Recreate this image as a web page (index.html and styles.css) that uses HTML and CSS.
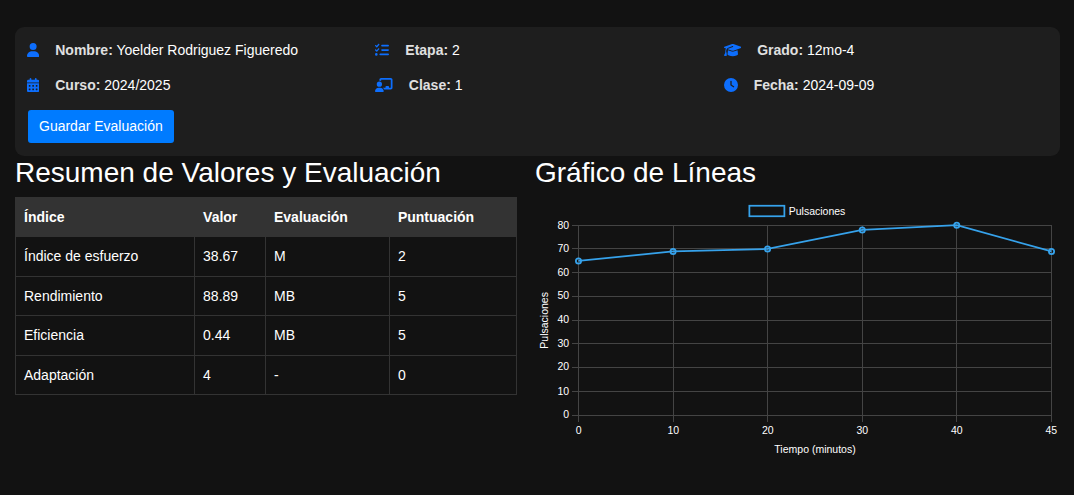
FILE: index.html
```html
<!DOCTYPE html>
<html lang="es">
<head>
<meta charset="utf-8">
<meta name="viewport" content="width=device-width, initial-scale=1">
<title>Evaluación</title>
<link rel="stylesheet" href="styles.css">
</head>
<body>
<main class="page">
  <section class="card">
    <div class="info-grid">
      <div class="info">
        <svg class="icon" viewBox="0 0 448 512" aria-hidden="true"><path d="M224 256A128 128 0 1 0 224 0a128 128 0 1 0 0 256zm-45.7 48C79.8 304 0 383.8 0 482.3C0 498.7 13.3 512 29.7 512H418.3c16.4 0 29.7-13.3 29.7-29.7C448 383.8 368.2 304 269.7 304H178.3z"/></svg>
        <p><strong>Nombre:</strong> Yoelder Rodriguez Figueredo</p>
      </div>
      <div class="info">
        <svg class="icon" viewBox="0 0 512 512" aria-hidden="true"><path d="M152.1 38.2c9.9 8.9 10.7 24 1.8 33.9l-72 80c-4.4 4.9-10.6 7.8-17.2 7.9s-12.9-2.4-17.6-7L7 113C-2.3 103.6-2.3 88.4 7 79s24.6-9.4 33.9 0l22.1 22.1 55.1-61.2c8.9-9.9 24-10.7 33.9-1.8zm0 160c9.9 8.9 10.7 24 1.8 33.9l-72 80c-4.4 4.9-10.6 7.8-17.2 7.9s-12.9-2.4-17.6-7L7 273c-9.4-9.4-9.4-24.6 0-33.9s24.6-9.4 33.9 0l22.1 22.1 55.1-61.2c8.9-9.9 24-10.7 33.9-1.8zM224 96c0-17.7 14.3-32 32-32H480c17.7 0 32 14.3 32 32s-14.3 32-32 32H256c-17.7 0-32-14.3-32-32zm0 160c0-17.7 14.3-32 32-32H480c17.7 0 32 14.3 32 32s-14.3 32-32 32H256c-17.7 0-32-14.3-32-32zM160 416c0-17.7 14.3-32 32-32H480c17.7 0 32 14.3 32 32s-14.3 32-32 32H192c-17.7 0-32-14.3-32-32zM48 368a48 48 0 1 1 0 96 48 48 0 1 1 0-96z"/></svg>
        <p><strong>Etapa:</strong> 2</p>
      </div>
      <div class="info">
        <svg class="icon" viewBox="0 0 640 512" aria-hidden="true"><path d="M320 32c-8.1 0-16.1 1.4-23.7 4.1L15.8 137.4C6.3 140.9 0 149.9 0 160s6.3 19.1 15.8 22.6l57.9 20.9C57.3 229.3 48 259.8 48 291.9v28.1c0 28.4-10.8 57.7-22.3 80.8c-6.5 13-13.9 25.8-22.5 37.6C0 442.7-.9 448.3 .9 453.4s6 8.9 11.2 10.2l64 16c4.2 1.1 8.7 .3 12.4-2s6.3-6.1 7.1-10.4c8.6-42.8 4.3-81.2-2.1-108.7C90.3 344.3 86 329.8 80 316.5V291.9c0-30.2 10.2-58.7 27.9-81.5c12.9-15.5 29.6-28 49.2-35.7l157-61.7c8.2-3.2 17.5 .8 20.7 9s-.8 17.5-9 20.7l-157 61.7c-12.4 4.9-23.3 12.4-32.2 21.6l159.6 57.6c7.6 2.7 15.6 4.1 23.7 4.1s16.1-1.4 23.7-4.1L624.2 182.6c9.5-3.4 15.8-12.5 15.8-22.6s-6.3-19.1-15.8-22.6L343.7 36.1C336.1 33.4 328.1 32 320 32zM128 408c0 35.3 86 72 192 72s192-36.7 192-72L496.7 262.6 354.5 314c-11.1 4-22.8 6-34.5 6s-23.5-2-34.5-6L143.3 262.6 128 408z"/></svg>
        <p><strong>Grado:</strong> 12mo-4</p>
      </div>
      <div class="info">
        <svg class="icon" viewBox="0 0 448 512" aria-hidden="true"><path d="M128 0c17.7 0 32 14.3 32 32V64H288V32c0-17.7 14.3-32 32-32s32 14.3 32 32V64h48c26.5 0 48 21.5 48 48v48H0V112C0 85.5 21.5 64 48 64H96V32c0-17.7 14.3-32 32-32zM0 192H448V464c0 26.5-21.5 48-48 48H48c-26.5 0-48-21.5-48-48V192zm64 80v32c0 8.8 7.2 16 16 16h32c8.8 0 16-7.2 16-16V272c0-8.8-7.2-16-16-16H80c-8.8 0-16 7.2-16 16zm128 0v32c0 8.8 7.2 16 16 16h32c8.8 0 16-7.2 16-16V272c0-8.8-7.2-16-16-16H208c-8.8 0-16 7.2-16 16zm144-16c-8.8 0-16 7.2-16 16v32c0 8.8 7.2 16 16 16h32c8.8 0 16-7.2 16-16V272c0-8.8-7.2-16-16-16H336zM64 400v32c0 8.8 7.2 16 16 16h32c8.8 0 16-7.2 16-16V400c0-8.8-7.2-16-16-16H80c-8.8 0-16 7.2-16 16zm144-16c-8.8 0-16 7.2-16 16v32c0 8.8 7.2 16 16 16h32c8.8 0 16-7.2 16-16V400c0-8.8-7.2-16-16-16H208zm112 16v32c0 8.8 7.2 16 16 16h32c8.8 0 16-7.2 16-16V400c0-8.8-7.2-16-16-16H336c-8.8 0-16 7.2-16 16z"/></svg>
        <p><strong>Curso:</strong> 2024/2025</p>
      </div>
      <div class="info">
        <svg class="icon" viewBox="0 0 640 512" aria-hidden="true"><path d="M160 64c0-35.3 28.7-64 64-64H576c35.3 0 64 28.7 64 64V352c0 35.3-28.7 64-64 64H336.8c-11.8-25.5-29.9-47.5-52.4-64H384V320c0-17.7 14.3-32 32-32h64c17.7 0 32 14.3 32 32v32h64V64L224 64v49.1C205.2 102.2 183.3 96 160 96V64zm0 64a96 96 0 1 1 0 192 96 96 0 1 1 0-192zM133.3 352h53.3C260.3 352 320 411.7 320 485.3c0 14.7-11.9 26.7-26.7 26.7H26.7C11.9 512 0 500.1 0 485.3C0 411.7 59.7 352 133.3 352z"/></svg>
        <p><strong>Clase:</strong> 1</p>
      </div>
      <div class="info">
        <svg class="icon" viewBox="0 0 512 512" aria-hidden="true"><path d="M256 0a256 256 0 1 1 0 512A256 256 0 1 1 256 0zM232 120V256c0 8 4 15.5 10.7 20l96 64c11 7.4 25.9 4.4 33.3-6.7s4.4-25.9-6.7-33.3L280 243.2V120c0-13.3-10.7-24-24-24s-24 10.7-24 24z"/></svg>
        <p><strong>Fecha:</strong> 2024-09-09</p>
      </div>
    </div>
    <button class="save" type="button">Guardar Evaluación</button>
  </section>

  <div class="panels">
    <section>
      <h2 class="title">Resumen de Valores y Evaluación</h2>
      <table class="summary">
        <thead>
          <tr><th>Índice</th><th>Valor</th><th>Evaluación</th><th>Puntuación</th></tr>
        </thead>
        <tbody>
          <tr><td>Índice de esfuerzo</td><td>38.67</td><td>M</td><td>2</td></tr>
          <tr><td>Rendimiento</td><td>88.89</td><td>MB</td><td>5</td></tr>
          <tr><td>Eficiencia</td><td>0.44</td><td>MB</td><td>5</td></tr>
          <tr><td>Adaptación</td><td>4</td><td>-</td><td>0</td></tr>
        </tbody>
      </table>
    </section>
    <section>
      <h2 class="title">Gráfico de Líneas</h2>
      <svg class="chart" viewBox="0 0 600 300" role="img" aria-label="Pulsaciones por tiempo en minutos">
        <rect class="series" x="245" y="10" width="40" height="12"/>
        <text x="290" y="20">Pulsaciones</text>
        <path class="grid" d="M42 32.6H591M42 58.9H591M42 86.3H591M42 113.7H591M42 141.1H591M42 167.4H591M42 194.9H591M42 222.3H591M42 249.7H591M49.7 32V257M158.3 32V257M265.7 32V257M374.3 32V257M481.7 32V257M590.3 32V257"/>
        <g class="ticks-y">
          <text x="39" y="36">80</text><text x="39" y="63">70</text><text x="39" y="90">60</text>
          <text x="39" y="117">50</text><text x="39" y="144">40</text><text x="39" y="171">30</text>
          <text x="39" y="198">20</text><text x="39" y="226">10</text><text x="39" y="253">0</text>
        </g>
        <g class="ticks-x">
          <text x="50" y="271">0</text><text x="158" y="271">10</text><text x="266" y="271">20</text>
          <text x="374" y="271">30</text><text x="482" y="271">40</text><text x="590" y="271">45</text>
          <text x="320" y="293">Tiempo (minutos)</text>
          <text transform="translate(15 141) rotate(-90)">Pulsaciones</text>
        </g>
        <polyline class="series" points="49.7,73 157.8,62.2 265.8,59.4 374,37.7 482,32.2 590.3,62.2"/>
        <g class="series">
          <circle cx="49.7" cy="73" r="3"/><circle cx="157.8" cy="62.2" r="3"/><circle cx="265.8" cy="59.4" r="3"/>
          <circle cx="374" cy="37.7" r="3"/><circle cx="482" cy="32.2" r="3"/><circle cx="590.3" cy="62.2" r="3"/>
        </g>
      </svg>
    </section>
  </div>
</main>
</body>
</html>
```
FILE: styles.css
```css
* { box-sizing: border-box; }

body {
  margin: 0;
  background: #121212;
  color: #fff;
  font: 14px/22px "Liberation Sans", Arial, sans-serif;
}

.page { padding: 27px 14px 0 15px; }

.card {
  padding: 12px 0 13px;
  border-radius: 9px;
  background: #1e1e1e;
}

.info-grid {
  display: grid;
  grid-template-columns: repeat(3, 1fr);
  row-gap: 13px;
  margin-bottom: 14px;
}

.info {
  display: flex;
  align-items: center;
  gap: 16px;
  padding-left: 12px;
}

.info p { margin: 0; }
.info strong { color: #e0e0e0; }

.icon {
  height: 14px;
  fill: #0d6efd;
}

.save {
  display: block;
  margin-left: 13px;
  padding: 6px 11px;
  border: 0;
  border-radius: 3px;
  background: #007bff;
  color: #fff;
  font: inherit;
  line-height: 21px;
}

.panels {
  display: grid;
  grid-template-columns: 502fr 525fr;
  gap: 18px;
}

.title {
  margin: 0 0 8px;
  font-size: 28px;
  font-weight: 400;
  line-height: 33px;
}

.summary {
  width: 100%;
  height: 198px;
  border-collapse: collapse;
}

.summary th,
.summary td {
  padding: 8px;
  border: 1px solid #333;
  text-align: left;
}

.summary th { background: #333; }

.chart {
  display: block;
  width: 100%;
  height: auto;
  font-size: 12px;
}

.chart text { fill: #fff; }
.grid {
  fill: none;
  stroke: #444;
  shape-rendering: crispEdges;
  vector-effect: non-scaling-stroke;
}
.series { fill: none; stroke: #36a2eb; stroke-width: 2; }
.ticks-y { text-anchor: end; }
.ticks-x { text-anchor: middle; }
```
